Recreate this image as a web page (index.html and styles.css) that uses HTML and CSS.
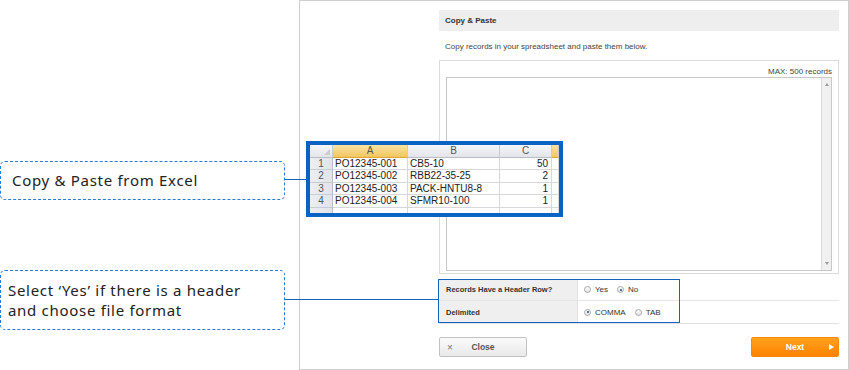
FILE: index.html
```html
<!DOCTYPE html>
<html>
<head>
<meta charset="utf-8">
<link rel="stylesheet" href="styles.css">
</head>
<body>
<div class="stage">
  <aside class="notes">
    <div class="note note-excel">Copy &amp; Paste from Excel</div>
    <div class="note note-header">Select ‘Yes’ if there is a header<br>and choose file format</div>
  </aside>
  <section class="panel">
    <div class="panel-title">Copy &amp; Paste</div>
    <p class="panel-desc">Copy records in your spreadsheet and paste them below.</p>
    <div class="paste-box">
      <div class="max">MAX: 500 records</div>
      <div class="textarea">
        <div class="scrollbar"><span class="arrow up"></span><span class="arrow down"></span></div>
      </div>
    </div>
    <div class="options">
      <div class="opt-row">
        <div class="opt-label">Records Have a Header Row?</div>
        <div class="opt-value">
          <span class="radio"></span><span class="radio-text">Yes</span>
          <span class="radio checked"></span><span class="radio-text">No</span>
        </div>
        <div class="opt-rest"></div>
      </div>
      <div class="opt-row">
        <div class="opt-label">Delimited</div>
        <div class="opt-value">
          <span class="radio checked"></span><span class="radio-text">COMMA</span>
          <span class="radio"></span><span class="radio-text">TAB</span>
        </div>
        <div class="opt-rest"></div>
      </div>
    </div>
    <div class="actions">
      <button class="btn btn-close"><span class="x">×</span><span class="label">Close</span></button>
      <button class="btn btn-next"><span class="label">Next</span><span class="tri"></span></button>
    </div>
  </section>

  <div class="excel">
    <div class="xl-grid">
      <div class="xh corner"><span class="sel"></span></div>
      <div class="xh hl">A</div>
      <div class="xh">B</div>
      <div class="xh">C</div>
      <div class="xh hl"></div>

      <div class="xr">1</div><div class="xc">PO12345-001</div><div class="xc">CB5-10</div><div class="xc num">50</div><div class="xc"></div>
      <div class="xr">2</div><div class="xc">PO12345-002</div><div class="xc">RBB22-35-25</div><div class="xc num">2</div><div class="xc"></div>
      <div class="xr">3</div><div class="xc">PO12345-003</div><div class="xc">PACK-HNTU8-8</div><div class="xc num">1</div><div class="xc"></div>
      <div class="xr">4</div><div class="xc">PO12345-004</div><div class="xc">SFMR10-100</div><div class="xc num">1</div><div class="xc"></div>
      <div class="xr last"></div><div class="xc last"></div><div class="xc last"></div><div class="xc last"></div><div class="xc last"></div>
    </div>
  </div>

  <div class="highlight"></div>
  <div class="connector c1"></div>
  <div class="connector c2"></div>
</div>
</body>
</html>
```

FILE: styles.css
```css
* { box-sizing: border-box; }
html, body { margin: 0; padding: 0; background: #fff; }
body { font-family: "Liberation Sans", Arial, sans-serif; }

.stage {
  position: relative;
  width: 849px;
  height: 370px;
  display: flex;
  overflow: hidden;
}

/* ---------- left notes ---------- */
.notes {
  width: 299px;
  flex: none;
  padding-top: 161px;
}
.note {
  width: 285px;
  border: 1px dashed #2a7ad0;
  border-radius: 5px;
  color: #222;
  font-family: "Noto Sans", "Liberation Sans", sans-serif;
  font-size: 15px;
  letter-spacing: 0.7px;
}
.note-excel {
  height: 39px;
  padding-left: 11px;
  line-height: 37px;
}
.note-header {
  margin-top: 70px;
  height: 60px;
  padding: 9px 0 0 7px;
  line-height: 20px;
}

/* ---------- panel ---------- */
.panel {
  width: 550px;
  height: 370px;
  flex: none;
  border: 1px solid #cfcfcf;
  padding: 9px 9px 0 139px;
  display: flex;
  flex-direction: column;
}
.panel-title {
  height: 21px;
  background: #eeeeee;
  font-size: 8px;
  font-weight: bold;
  color: #333;
  line-height: 21px;
  padding-left: 6px;
}
.panel-desc {
  margin: 10px 0 0 0;
  height: 12px;
  font-size: 8px;
  line-height: 12px;
  color: #444;
  padding-left: 6px;
}
.paste-box {
  margin-top: 7px;
  border: 1px solid #dcdcdc;
  padding: 6px 6px 2px 6px;
}
.max {
  height: 10px;
  font-size: 8px;
  line-height: 10px;
  text-align: right;
  color: #444;
}
.textarea {
  height: 194px;
  border: 1px solid #c8c8c8;
  display: flex;
  justify-content: flex-end;
}
.scrollbar {
  width: 10px;
  background: #f0f0f0;
  border-left: 1px solid #dedede;
  display: flex;
  flex-direction: column;
  justify-content: space-between;
  align-items: center;
  padding: 5px 0;
}
.arrow {
  width: 0; height: 0;
  border-left: 2px solid transparent;
  border-right: 2px solid transparent;
}
.arrow.up { border-bottom: 3px solid #999; }
.arrow.down { border-top: 3px solid #999; }

.options {
  margin-top: 5px;
  border-bottom: 1px solid #e2e2e2;
}
.opt-row {
  display: flex;
  height: 22px;
  border-bottom: 1px solid #e6e6e6;
}
.opt-row:last-child { border-bottom: 0; height: 22px; }
.opt-label {
  width: 139px;
  background: #efefef;
  font-size: 7.5px;
  font-weight: bold;
  color: #333;
  line-height: 21px;
  padding-left: 7px;
  border-right: 1px solid #e2e2e2;
}
.opt-row:last-child .opt-label { line-height: 23px; }
.opt-value {
  width: 101px;
  display: flex;
  align-items: center;
  padding-left: 6px;
  font-size: 8px;
  color: #333;
}
.opt-rest { flex: 1; border-left: 1px solid #f0f0f0; }
.radio {
  width: 7px; height: 7px;
  border-radius: 50%;
  border: 1px solid #a8a8a8;
  background: linear-gradient(#fdfdfd, #e4e4e4);
  position: relative;
  flex: none;
}
.radio.checked::after {
  content: "";
  position: absolute;
  left: 1.5px; top: 1.5px;
  width: 2px; height: 2px;
  border-radius: 50%;
  background: #234a86;
}
.radio-text { margin: 0 9px 0 4px; }

.actions {
  margin-top: 13px;
  display: flex;
  justify-content: space-between;
}
.btn {
  width: 88px;
  height: 20px;
  border-radius: 2px;
  font-family: "Liberation Sans", Arial, sans-serif;
  font-size: 8.5px;
  font-weight: bold;
  padding: 0;
  display: flex;
  align-items: center;
  position: relative;
}
.btn-close {
  border: 1px solid #c2c2c2;
  background: linear-gradient(#fbfbfb, #e9e9e9);
  color: #555;
}
.btn-close .x {
  position: absolute;
  left: 7px;
  font-weight: normal;
  font-size: 10px;
  color: #777;
}
.btn-close .label { flex: 1; text-align: center; }
.btn-next {
  border: 1px solid #f58a00;
  background: linear-gradient(#ffa21e, #ff8200);
  color: #fff;
}
.btn-next .label { flex: 1; text-align: center; }
.btn-next .tri {
  position: absolute;
  right: 4px;
  top: 6px;
  width: 0; height: 0;
  border-top: 3.5px solid transparent;
  border-bottom: 3.5px solid transparent;
  border-left: 5px solid #fff;
}

/* ---------- overlays ---------- */
.highlight {
  position: absolute;
  left: 438px;
  top: 279px;
  width: 242px;
  height: 44px;
  border: 1px solid #1565c0;
}
.connector {
  position: absolute;
  height: 1px;
  background: #1565c0;
}
.c1 { left: 285px; top: 179px; width: 21px; }
.c2 { left: 285px; top: 299px; width: 153px; }

/* ---------- excel image ---------- */
.excel {
  position: absolute;
  left: 306px;
  top: 141px;
  width: 257px;
  height: 76px;
  border: 4px solid #0a63c2;
  background: #fff;
  overflow: hidden;
}
.xl-grid {
  display: grid;
  grid-template-columns: 23px 75px 92px 52px 7px;
  grid-template-rows: 13px 12px 13px 12px 13px 5px;
  font-family: "Liberation Sans", Arial, sans-serif;
  font-size: 10px;
  color: #222;
}
.xh {
  background: linear-gradient(#f6f7f9, #e2e5ea);
  border-right: 1px solid #c9ccd2;
  border-bottom: 1px solid #b8bcc4;
  color: #555;
  text-align: center;
  line-height: 12px;
  font-size: 10px;
}
.xh.hl { background: linear-gradient(#fbe3a4, #f2c660); border-bottom-color: #e0a53a; }
.corner { position: relative; }
.sel {
  position: absolute;
  right: 2px; bottom: 2px;
  width: 0; height: 0;
  border-left: 6px solid transparent;
  border-bottom: 6px solid #c9ccd2;
}
.xr {
  background: linear-gradient(90deg, #eceef1, #e1e4e9);
  border-right: 1px solid #b8bcc4;
  border-bottom: 1px solid #c9ccd2;
  color: #555;
  text-align: center;
  line-height: 12px;
}
.xc {
  border-right: 1px solid #d6d8dc;
  border-bottom: 1px solid #d6d8dc;
  padding-left: 2px;
  line-height: 12px;
  white-space: nowrap;
  overflow: hidden;
}
.xc.num { text-align: right; padding-right: 3px; }
.last { border-bottom: 0; }
```
